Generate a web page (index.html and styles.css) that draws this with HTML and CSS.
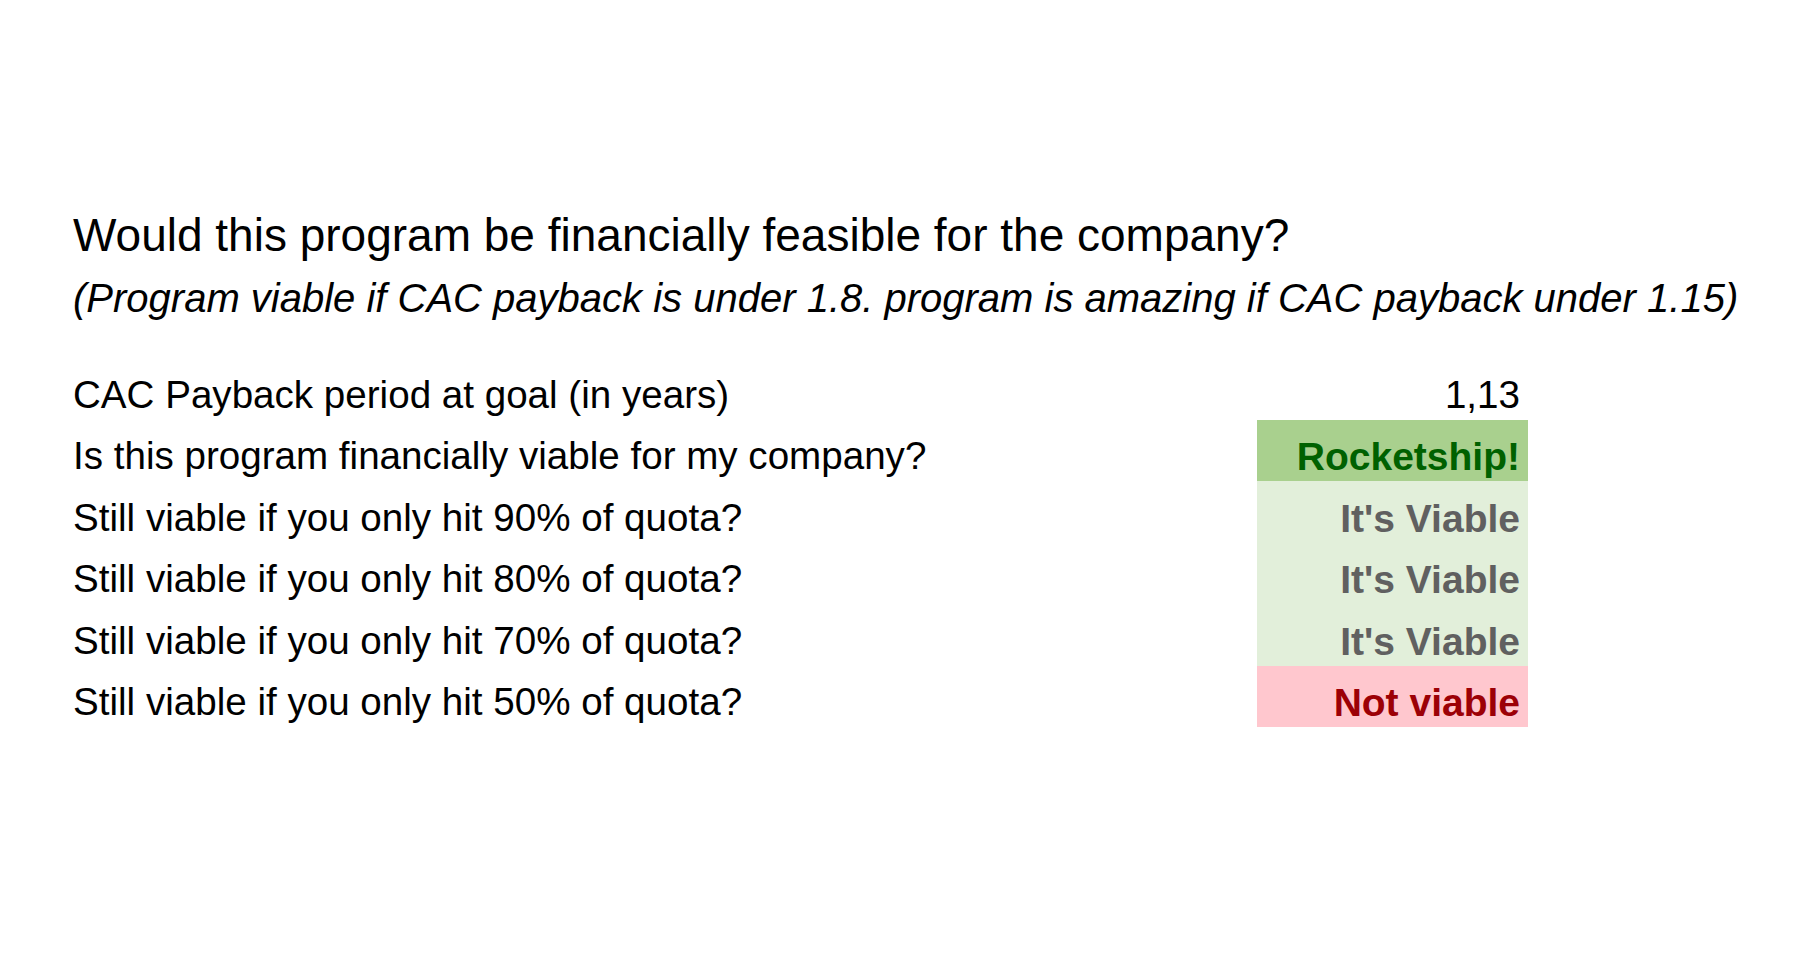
FILE: index.html
```html
<!DOCTYPE html>
<html lang="en">
<head>
<meta charset="utf-8">
<title>CAC Payback</title>
<link rel="stylesheet" href="styles.css">
</head>
<body>
<main class="sheet">
  <h1 class="title">Would this program be financially feasible for the company?</h1>
  <p class="subtitle">(Program viable if CAC payback is under 1.8. program is amazing if CAC payback under 1.15)</p>
  <div class="grid">
    <div class="label">CAC Payback period at goal (in years)</div>
    <div class="value">1,13</div>
    <div class="label">Is this program financially viable for my company?</div>
    <div class="value bold rocket">Rocketship!</div>
    <div class="label">Still viable if you only hit 90% of quota?</div>
    <div class="value bold viable">It's Viable</div>
    <div class="label">Still viable if you only hit 80% of quota?</div>
    <div class="value bold viable">It's Viable</div>
    <div class="label">Still viable if you only hit 70% of quota?</div>
    <div class="value bold viable">It's Viable</div>
    <div class="label">Still viable if you only hit 50% of quota?</div>
    <div class="value bold notviable">Not viable</div>
  </div>
</main>
</body>
</html>
```
FILE: styles.css
```css
html, body {
  margin: 0;
  padding: 0;
  background: #ffffff;
}
body {
  font-family: "Liberation Sans", Arial, sans-serif;
  color: #000000;
  width: 1800px;
  height: 966px;
  overflow: hidden;
}
.sheet {
  padding: 209px 0 0 73px;
}
.title {
  margin: 0;
  font-size: 46px;
  font-weight: normal;
  line-height: 53px;
  height: 53px;
}
.subtitle {
  margin: 12px 0 0 0;
  font-size: 40px;
  font-style: italic;
  line-height: 48px;
  height: 48px;
}
.grid {
  margin-top: 36px;
  display: grid;
  grid-template-columns: 1184px 271px;
  grid-auto-rows: 61.5px;
}
.label, .value {
  font-size: 38.6px;
  line-height: 1;
  display: flex;
  align-items: flex-end;
  padding-bottom: 5px;
  box-sizing: border-box;
  white-space: nowrap;
}
.value {
  justify-content: flex-end;
  padding-right: 8px;
}
.bold {
  font-weight: bold;
  font-size: 39px;
}
.rocket {
  background: #a9d08e;
  color: #006100;
}
.viable {
  background: #e2efda;
  color: #606060;
}
.notviable {
  background: #ffc7ce;
  color: #9c0006;
}
```
